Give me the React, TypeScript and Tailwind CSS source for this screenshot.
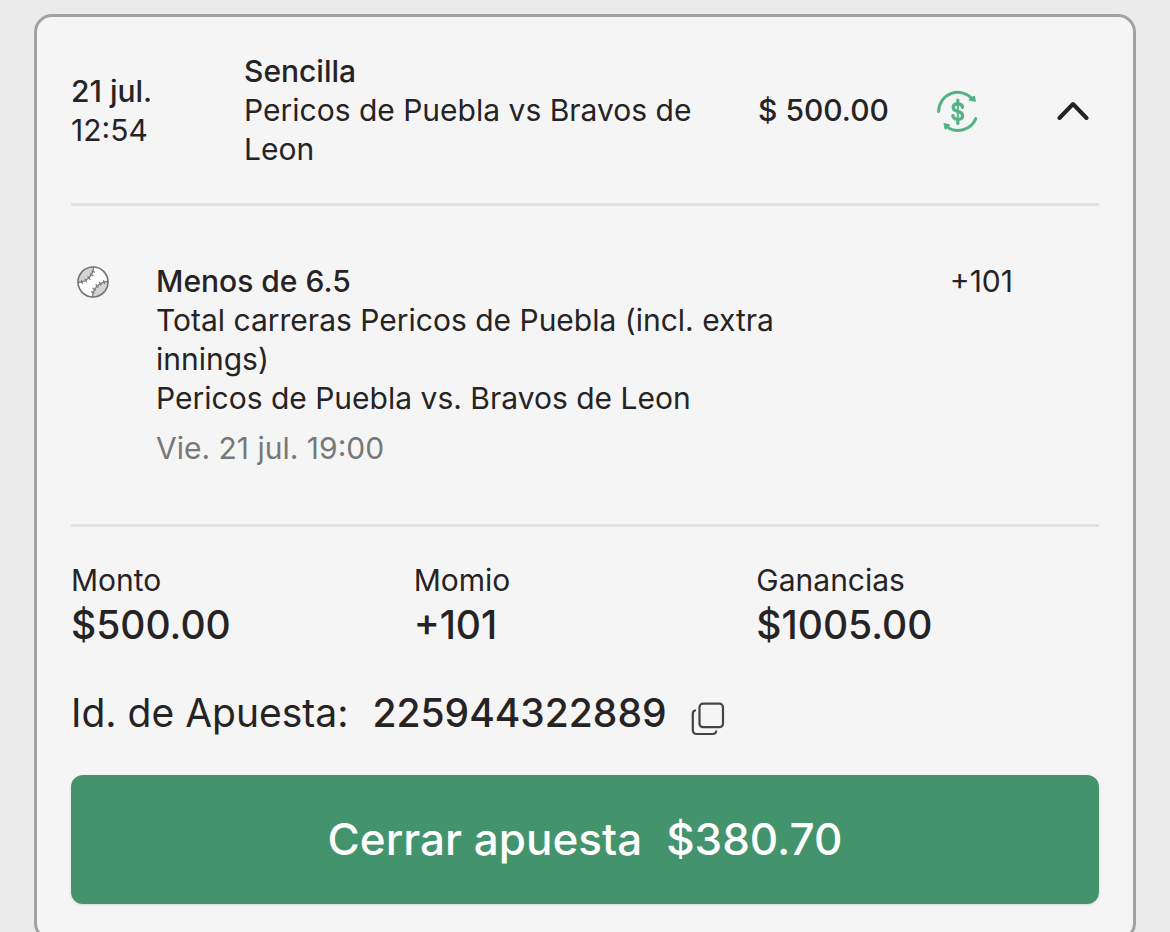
import { useState } from "react";

function CashOutIcon() {
  return (
    <svg width="44" height="44" viewBox="0 0 44 44" fill="none" stroke="#53b286" strokeWidth="3" strokeLinecap="round" role="img" aria-label="Cierre disponible">
      <path d="M2.600 22.400A19.300 19.300 0 0 1 36 9.500" />
      <path d="M33.700 10.800 38.200 7.600 39 11.800Z" fill="#53b286" strokeWidth="1.800" strokeLinejoin="round" />
      <path d="M39.800 29.600A19.300 19.300 0 0 1 10.500 37.600" />
      <path d="M8.500 35 13.200 36.200 9.400 39.600Z" fill="#53b286" strokeWidth="1.800" strokeLinejoin="round" />
      <g strokeWidth="3.200">
        <path d="M21.800 11V15M21.800 30V34.500" />
        <path d="M26.600 18.300C26.300 16 24.500 14.900 21.800 14.900C19 14.900 17.200 16.200 17.200 18.400C17.200 20.900 19.200 21.700 21.800 22.400C24.700 23.200 26.600 24.200 26.600 26.700C26.600 29 24.700 30.300 21.800 30.300C18.900 30.300 17.100 29 16.900 26.700" />
      </g>
      <path d="M21.800 14V31" strokeWidth="2" />
    </svg>
  );
}

function BaseballIcon() {
  return (
    <svg width="34" height="34" viewBox="0 0 34 34" fill="none" role="img" aria-label="Béisbol">
      <circle cx="17" cy="17" r="15" fill="#fff" />
      <path d="M2 17.500A15 15 0 0 1 17.500 2C17.500 10 11 17.200 2 17.500Z" fill="#d4d4d4" />
      <path d="M32 16.500A15 15 0 0 1 16.500 32C16.500 24 23 16.800 32 16.500Z" fill="#d4d4d4" />
      <g stroke="#7a7a7a" strokeWidth="1.300" strokeLinecap="round">
        <path d="M17.500 2C17.500 10 11 17.200 2 17.500" />
        <path d="M32 16.500C23 16.800 16.500 24 16.500 32" />
        <path d="M16 6 18.300 7.200M14.500 9 17 10.800M12 11.800 14 14.300M9 14 10.500 16.800M5.500 15.500 6.300 18.300" />
        <path d="M18 28 15.700 26.800M19.500 25 17 23.200M22 22.200 20 19.700M25 20 23.500 17.200M28.500 18.500 27.700 15.700" />
      </g>
      <circle cx="17" cy="17" r="15" stroke="#747474" strokeWidth="1.600" />
    </svg>
  );
}

function ChevronIcon({ open }: { open: boolean }) {
  return (
    <svg width="32" height="20" viewBox="0 0 32 20" fill="none" stroke="#262324" strokeWidth="4" strokeLinecap="round" strokeLinejoin="round" className={open ? "" : "rotate-180"}>
      <path d="M2.500 17 16 3 29.500 17" />
    </svg>
  );
}

function CopyIcon() {
  return (
    <svg width="34" height="34" viewBox="0 0 34 34" fill="none" stroke="#454344" strokeWidth="2.200" strokeLinecap="round">
      <rect x="8.500" y="1.700" width="23.500" height="23.500" rx="3.500" />
      <path d="M4 8.500C2.500 9 1.800 10 1.800 11.500V28C1.800 30.500 3.200 32 5.800 32H22C23.700 32 24.700 31.200 25.200 29.500" />
    </svg>
  );
}

const stats = [
  { label: "Monto", value: "$500.00" },
  { label: "Momio", value: "+101" },
  { label: "Ganancias", value: "$1005.00" },
];

export default function App() {
  const [open, setOpen] = useState(true);

  return (
    <main className="min-h-screen bg-[#ebebeb] px-[34px] pt-[14px] font-['Inter',sans-serif] text-[30px] leading-[39px] text-[#262324]">
      <article className="rounded-[18px] border-3 border-[#a2a2a2] bg-[#f5f5f5] px-[34px] pt-[35px] pb-[34px]">
        <header className="grid grid-cols-[173fr_514fr_178fr_121fr_42fr] items-center border-b-3 border-[#e2e2e2] pb-[34px]">
          <p>
            <span className="block font-medium">21 jul.</span>
            <span className="block">12:54</span>
          </p>
          <div>
            <h2 className="font-medium">Sencilla</h2>
            <p>Pericos de Puebla vs Bravos de Leon</p>
          </div>
          <p className="font-medium whitespace-nowrap">$ 500.00</p>
          <CashOutIcon />
          <button type="button" aria-label="Mostrar detalles" aria-expanded={open} onClick={() => setOpen(!open)} className="flex h-10 w-8 items-center">
            <ChevronIcon open={open} />
          </button>
        </header>

        {open && (
          <section className="flex items-start border-b-3 border-[#e2e2e2] py-[56px]">
            <div className="flex h-10 w-[85px] shrink-0 items-center pl-[5px]">
              <BaseballIcon />
            </div>
            <div className="flex-1">
              <h3 className="font-medium">Menos de 6.5</h3>
              <p className="max-w-[680px]">Total carreras Pericos de Puebla (incl. extra innings)</p>
              <p>Pericos de Puebla vs. Bravos de Leon</p>
              <p className="mt-[11px] text-[#787878]">Vie. 21 jul. 19:00</p>
            </div>
            <p className="pr-[86px]">+101</p>
          </section>
        )}

        <dl className="grid grid-cols-3 pt-[34px]">
          {stats.map((s) => (
            <div key={s.label}>
              <dt>{s.label}</dt>
              <dd className="text-[39px] leading-[50px] font-medium">{s.value}</dd>
            </div>
          ))}
        </dl>

        <div className="mt-[38px] flex items-center text-[39px] leading-[50px]">
          <span>Id. de Apuesta:</span>
          <span className="ml-6 font-medium">225944322889</span>
          <button type="button" aria-label="Copiar id de apuesta" className="mt-3 ml-6">
            <CopyIcon />
          </button>
        </div>

        <button type="button" className="mt-[37px] flex h-[129px] w-full items-center justify-center gap-6 rounded-xl bg-[#43936c] text-[44px] font-medium text-white shadow-sm">
          <span>Cerrar apuesta</span>
          <span>$380.70</span>
        </button>
      </article>
    </main>
  );
}
